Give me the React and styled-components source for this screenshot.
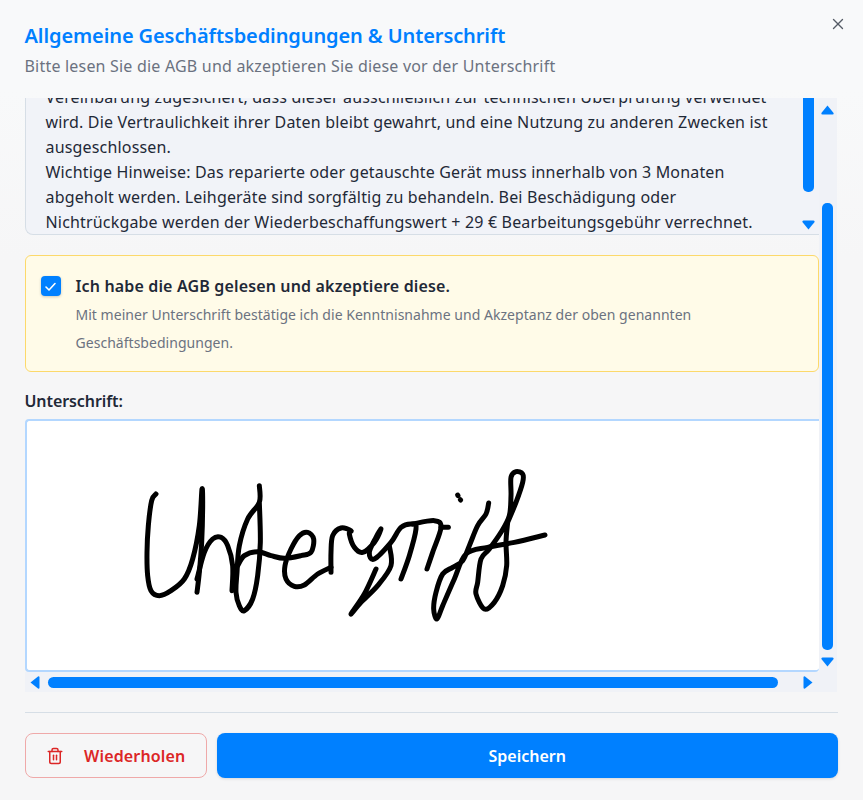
import React from "react";
import styled, { createGlobalStyle } from "styled-components";
import { Trash2, X } from "lucide-react";

const GlobalStyle = createGlobalStyle`
  html, body { margin: 0; padding: 0; background: #f6f6f7; }
  * { box-sizing: border-box; }
`;

const Modal = styled.div`
  width: 863px;
  height: 800px;
  position: relative;
  overflow: hidden;
  padding: 0 25.5px 0 24.5px;
  background: linear-gradient(to bottom, #f8f9fa 0, #f8f9fa 90px, #f6f6f7 260px);
  font-family: "Noto Sans", "Liberation Sans", sans-serif;
  color: #1f2937;
`;
const Close = styled.button`
  position: absolute;
  top: 14px;
  right: 15px;
  width: 20px;
  height: 20px;
  padding: 0;
  border: 0;
  background: none;
  color: #555b66;
  display: flex;
  align-items: center;
  justify-content: center;
`;
const Header = styled.header`
  height: 98px;
  padding-top: 21px;
`;
const Title = styled.h2`
  margin: 0;
  font-size: 20px;
  line-height: 30px;
  font-weight: 600;
  letter-spacing: -0.1px;
  color: #0080ff;
`;
const Subtitle = styled.p`
  margin: 3px 0 0;
  font-size: 16px;
  line-height: 24px;
  letter-spacing: 0.2px;
  color: #6b7280;
`;
const ScrollArea = styled.div`
  display: grid;
  grid-template-columns: 794px 18px;
  grid-template-rows: 574px 20px;
`;
const Content = styled.div`
  overflow: hidden;
`;
const Terms = styled.div`
  display: grid;
  grid-template-columns: 1fr 20px;
  height: 137px;
  background: #f1f3f8;
  border-bottom: 1px solid #d6dee6;
  border-left: 1px solid #d6dee6;
  border-radius: 0 0 0 8px;
  overflow: hidden;
`;
const TermsText = styled.div`
  padding: 0 18px 0 20px;
  margin-top: -13px;
  font-size: 16px;
  line-height: 25px;
  letter-spacing: 0.17px;
`;
const VTrack = styled.div`
  display: flex;
  flex-direction: column;
  align-items: center;
  background: ${(p) => p.$bg || "transparent"};
`;
const Thumb = styled.div`
  width: 11px;
  height: ${(p) => p.$size}px;
  margin-top: ${(p) => p.$offset}px;
  background: #0080ff;
  border-radius: ${(p) => p.$radius};
  flex: none;
`;
const Spacer = styled.div`
  flex: 1;
`;
const HTrack = styled.div`
  display: flex;
  align-items: center;
  padding: 0 24px 0 5.5px;
  background: #f0f2f7;
  grid-column: 1 / span 2;
`;
const HThumb = styled.div`
  width: 730px;
  height: 11px;
  margin-left: 8px;
  background: #0080ff;
  border-radius: 6px;
`;
const Arrow = styled.svg`
  display: block;
  flex: none;
  fill: #0080ff;
  margin: ${(p) => p.$margin || 0};
`;
const Consent = styled.div`
  display: flex;
  gap: 15px;
  height: 117px;
  margin: 20px 0 0;
  padding: 20px 15px 0;
  width: 794px;
  background: #fffbe8;
  border: 1px solid #fcd96b;
  border-radius: 6px;
`;
const Check = styled.div`
  width: 20px;
  height: 20px;
  flex: none;
  border-radius: 4px;
  background: #0080ff;
  box-shadow: 0 1px 3px rgba(0, 0, 0, 0.2);
  color: #fff;
  display: flex;
  align-items: center;
  justify-content: center;
`;
const ConsentLabel = styled.div`
  font-size: 16px;
  line-height: 20px;
  font-weight: 600;
  letter-spacing: 0.15px;
  color: #1f2937;
`;
const ConsentNote = styled.div`
  margin-top: 5px;
  font-size: 14px;
  line-height: 28px;
  letter-spacing: 0.03px;
  color: #6b7280;
`;
const SignLabel = styled.div`
  margin-top: 17px;
  font-size: 16px;
  line-height: 24px;
  font-weight: 600;
  letter-spacing: -0.08px;
  color: #1f2937;
`;
const Canvas = styled.div`
  width: 794px;
  height: 253px;
  margin-top: 6px;
  background: #fff;
  border: 2px solid #b3d7ff;
  border-right: 0;
  border-radius: 4px 0 4px 4px;
  overflow: hidden;
`;
const Signature = styled.svg`
  display: block;
  width: 792px;
  height: 249px;
  fill: none;
  stroke: #000;
  stroke-width: 15;
  stroke-linecap: round;
  stroke-linejoin: round;
`;
const Footer = styled.footer`
  margin-top: 20px;
  padding-top: 20px;
  border-top: 1px solid #d6dee6;
  display: flex;
  gap: 10px;
`;
const RetryButton = styled.button`
  width: 182.5px;
  height: 45px;
  display: flex;
  align-items: center;
  justify-content: center;
  gap: 20px;
  background: transparent;
  border: 1px solid #efa9a9;
  border-radius: 8px;
  color: #dc2626;
  font: 600 16px "Noto Sans", sans-serif;
  letter-spacing: 0.15px;
`;
const SaveButton = styled.button`
  flex: 1;
  height: 45px;
  border: 0;
  border-radius: 8px;
  background: #0080ff;
  box-shadow: 0 1px 3px rgba(0, 0, 0, 0.12);
  color: #fff;
  font: 600 16px "Noto Sans", sans-serif;
`;

const strokes = [
  [[75,105],[62,125],[52,200],[48,280],[50,350],[60,395],[85,410],[120,395],[160,360],[185,300],[205,200],[213,90],[215,140],[212,250],[205,340],[198,400]],
  [[198,360],[220,280],[245,240],[270,235],[290,260],[305,320],[303,395]],
  [[385,80],[385,130],[350,180],[325,260],[318,340],[315,400],[325,440],[340,455],[365,420],[380,350],[388,250],[385,130]],
  [[320,320],[340,290],[380,278],[420,290],[460,298],[510,290],[540,280],[548,240],[530,220],[505,230],[480,270],[462,320],[465,360],[490,382],[520,378],[560,345],[600,325]],
  [[600,340],[600,280],[605,230],[630,207],[660,215],[655,225],[670,265],[695,280],[730,250],[750,210],[735,235],[715,280],[730,300],[780,250],[810,205],[845,195],[855,210],[835,290],[810,360]],
  [[775,260],[780,320],[740,380],[690,430],[660,465],[700,405],[735,330]],
  [[845,195],[910,185],[930,205],[905,280],[888,330]],
  [[930,205],[952,205]],
  [[980,108],[981,110]],
  [[988,122],[989,123]],
  [[1073,132],[1065,165],[1040,200],[1015,260],[995,305],[965,325],[935,345],[915,400],[908,450],[918,480],[935,440],[970,360],[1005,285],[1070,265],[1150,250],[1242,228]],
  [[1130,190],[1155,130],[1175,70],[1175,45],[1155,38],[1140,55],[1140,110],[1135,170],[1110,220],[1075,270],[1050,300],[1040,370],[1035,405],[1060,450],[1090,430],[1115,380],[1127,320],[1125,250],[1130,190]],
];

// Catmull-Rom through every traced point of a pen stroke
const smooth = (pts) => {
  let d = `M${pts[0][0]} ${pts[0][1]}`;
  for (let i = 0; i < pts.length - 1; i++) {
    const p0 = pts[i - 1] || pts[i];
    const p1 = pts[i];
    const p2 = pts[i + 1];
    const p3 = pts[i + 2] || p2;
    const c1x = p1[0] + (p2[0] - p0[0]) / 6;
    const c1y = p1[1] + (p2[1] - p0[1]) / 6;
    const c2x = p2[0] - (p3[0] - p1[0]) / 6;
    const c2y = p2[1] - (p3[1] - p1[1]) / 6;
    d += ` C${c1x} ${c1y} ${c2x} ${c2y} ${p2[0]} ${p2[1]}`;
  }
  return d;
};

const Up = ({ margin }) => (
  <Arrow width="13" height="10" viewBox="0 0 13 10" $margin={margin}><path d="M6.5 .5 L12.6 8 Q13 9.5 11.5 9.5 H1.5 Q0 9.5 .4 8 Z" /></Arrow>
);
const Down = ({ margin }) => (
  <Arrow width="13" height="10" viewBox="0 0 13 10" $margin={margin}><path d="M6.5 9.5 L12.6 2 Q13 .5 11.5 .5 H1.5 Q0 .5 .4 2 Z" /></Arrow>
);
const Left = () => (
  <Arrow width="10" height="13" viewBox="0 0 10 13"><path d="M.5 6.5 L8 .4 Q9.5 0 9.5 1.5 V11.5 Q9.5 13 8 12.6 Z" /></Arrow>
);
const Right = () => (
  <Arrow width="10" height="13" viewBox="0 0 10 13"><path d="M9.5 6.5 L2 .4 Q.5 0 .5 1.5 V11.5 Q.5 13 2 12.6 Z" /></Arrow>
);

export default function App() {
  return (
    <>
      <GlobalStyle />
      <Modal>
        <Close aria-label="Schließen"><X size={18} strokeWidth={1.8} /></Close>
        <Header>
          <Title>Allgemeine Geschäftsbedingungen &amp; Unterschrift</Title>
          <Subtitle>Bitte lesen Sie die AGB und akzeptieren Sie diese vor der Unterschrift</Subtitle>
        </Header>
        <ScrollArea>
          <Content>
            <Terms>
              <TermsText>
                Vereinbarung zugesichert, dass dieser ausschließlich zur technischen Überprüfung verwendet wird. Die Vertraulichkeit ihrer Daten bleibt gewahrt, und eine Nutzung zu anderen Zwecken ist ausgeschlossen.
                <br />
                Wichtige Hinweise: Das reparierte oder getauschte Gerät muss innerhalb von 3 Monaten abgeholt werden. Leihgeräte sind sorgfältig zu behandeln. Bei Beschädigung oder Nichtrückgabe werden der Wiederbeschaffungswert + 29 € Bearbeitungsgebühr verrechnet.
              </TermsText>
              <VTrack>
                <Thumb $size={94} $offset={0} $radius="0 0 5px 5px" />
                <Spacer />
                <Down margin="0 0 5px" />
              </VTrack>
            </Terms>
            <Consent>
              <Check>
                <svg width="13" height="13" viewBox="0 0 13 13" fill="none" stroke="currentColor" strokeWidth="1.6" strokeLinecap="round" strokeLinejoin="round"><path d="M2 7 L5 10 L11 3.5" /></svg>
              </Check>
              <div>
                <ConsentLabel>Ich habe die AGB gelesen und akzeptiere diese.</ConsentLabel>
                <ConsentNote>Mit meiner Unterschrift bestätige ich die Kenntnisnahme und Akzeptanz der oben genannten Geschäftsbedingungen.</ConsentNote>
              </div>
            </Consent>
            <SignLabel>Unterschrift:</SignLabel>
            <Canvas>
              <Signature viewBox="-312 -114 2376 747">
                {strokes.map((s, i) => <path key={i} d={smooth(s)} />)}
              </Signature>
            </Canvas>
          </Content>
          <VTrack $bg="#f0f2f7">
            <Up margin="7px 0 0" />
            <Thumb $size={447} $offset={88} $radius="5px" />
            <Spacer />
            <Down margin="0 0 5px" />
          </VTrack>
          <HTrack>
            <Left />
            <HThumb />
            <Spacer />
            <Right />
          </HTrack>
        </ScrollArea>
        <Footer>
          <RetryButton><Trash2 size={18} strokeWidth={2} />Wiederholen</RetryButton>
          <SaveButton>Speichern</SaveButton>
        </Footer>
      </Modal>
    </>
  );
}
